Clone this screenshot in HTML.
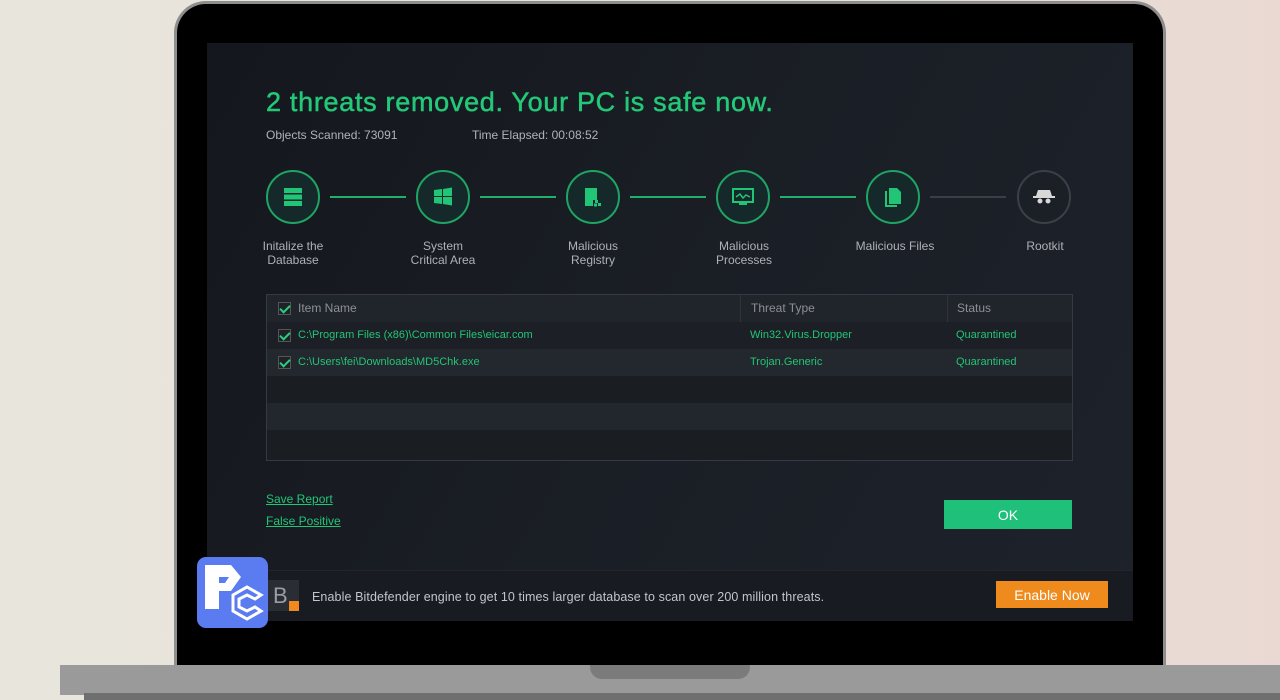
<!DOCTYPE html>
<html><head><meta charset="utf-8"><style>
*{margin:0;padding:0;box-sizing:border-box}
body{width:1280px;height:700px;overflow:hidden;position:relative;background:linear-gradient(90deg,#e8e5dc 0%,#e6e3da 60%,#ead9d3 100%);font-family:"Liberation Sans",sans-serif}
.bezel{position:absolute;left:174px;top:1px;width:992px;height:680px;background:#000;border:3px solid #8e8e8e;border-bottom:none;border-radius:32px 32px 0 0}
.screen{position:absolute;left:207px;top:43px;width:926px;height:578px;background:linear-gradient(120deg,#14171d 0%,#1a1e25 50%,#1d222b 100%);overflow:hidden;color:#b9bcc0}
.base{position:absolute;left:60px;top:665px;width:1220px;height:30px;background:#9a9a9a}
.base2{position:absolute;left:84px;top:693px;width:1196px;height:7px;background:#6f6f6f}
.notch{position:absolute;left:590px;top:665px;width:160px;height:14px;background:#7b7b7b;border-radius:0 0 12px 12px}
h1{position:absolute;left:59px;top:44px;font-size:27px;font-weight:normal;color:#23c878;letter-spacing:0.7px;-webkit-text-stroke:0.5px #23c878}
.sub{position:absolute;top:85px;font-size:12px;color:#b0b3b8}
.step{position:absolute;top:127px;width:54px;height:54px;border:2px solid #1fa463;border-radius:50%;background:#15282a;display:flex;align-items:center;justify-content:center}
.step.off{border-color:#3b4048;background:#1b1f26}
.line{position:absolute;top:153px;height:2px;background:#1fb06a;width:76px}
.line.off{background:#3a3f47}
.lbl{position:absolute;top:196px;width:120px;text-align:center;font-size:12px;line-height:14px;color:#aeb1b6}
.tbl{position:absolute;left:59px;top:251px;width:807px;height:167px;border:1px solid #343943;background:#1a1d23}
.row{position:absolute;left:0;width:805px;height:27px;font-size:11px;line-height:27px}
.cb{position:absolute;left:11px;top:7px;width:13px;height:13px;border:1px solid #555;background:#1f2228}
.cb:after{content:"";position:absolute;left:3px;top:0px;width:4px;height:8px;border:solid #2bd07f;border-width:0 2px 2px 0;transform:rotate(45deg)}
.g{color:#22c576}
.btn{position:absolute;display:flex;align-items:center;justify-content:center;color:#fff;font-size:14px}
a{color:#22c576;text-decoration:underline;font-size:12px;position:absolute;left:59px}
</style></head><body>
<div class="bezel"></div>
<div class="base"></div><div class="base2"></div><div class="notch"></div>
<div class="screen">
<h1>2 threats removed. Your PC is safe now.</h1>
<div class="sub" style="left:59px">Objects Scanned: 73091</div>
<div class="sub" style="left:265px">Time Elapsed: 00:08:52</div>

<div class="step" style="left:59px"><svg width="22" height="22" viewBox="0 0 22 22"><rect x="2" y="2" width="18" height="5" fill="#22c576"/><rect x="2" y="8.5" width="18" height="5" fill="#22c576"/><rect x="2" y="15" width="18" height="5" fill="#22c576"/></svg></div>
<div class="line" style="left:123px"></div>
<div class="step" style="left:209px"><svg width="22" height="22" viewBox="0 0 22 22"><path d="M2 4l8-1v7H2zM11 3l9-1.5V10h-9zM2 11h8v7l-8-1zM11 11h9v8.5l-9-1.5z" fill="#22c576"/></svg></div>
<div class="line" style="left:273px"></div>
<div class="step" style="left:359px"><svg width="22" height="22" viewBox="0 0 22 22"><path d="M3 2h12v12h-4v6H3z" fill="#22c576"/><rect x="13" y="14" width="3" height="3" fill="#22c576"/><rect x="16" y="17" width="3" height="3" fill="#22c576"/><rect x="12" y="17.5" width="3" height="3" fill="#22c576"/></svg></div>
<div class="line" style="left:423px"></div>
<div class="step" style="left:509px"><svg width="24" height="22" viewBox="0 0 24 22"><rect x="2" y="3" width="20" height="13" fill="none" stroke="#22c576" stroke-width="2"/><path d="M5 11l4-3 3 4 3-3 4 2" fill="none" stroke="#22c576" stroke-width="1.5"/><rect x="8" y="17" width="8" height="2" fill="#22c576"/></svg></div>
<div class="line" style="left:573px"></div>
<div class="step" style="left:659px"><svg width="22" height="22" viewBox="0 0 22 22"><path d="M7 2h8l4 4v12H7z" fill="#22c576"/><path d="M4 5v15h11" fill="none" stroke="#22c576" stroke-width="2"/></svg></div>
<div class="line off" style="left:723px"></div>
<div class="step off" style="left:810px"><svg width="24" height="20" viewBox="0 0 24 20"><path d="M6 3h12l2 6H4z" fill="#d8d8d8"/><rect x="1" y="9" width="22" height="2" fill="#d8d8d8"/><circle cx="8" cy="14" r="2.5" fill="#d8d8d8"/><circle cx="16" cy="14" r="2.5" fill="#d8d8d8"/></svg></div>

<div class="lbl" style="left:26px">Initalize the<br>Database</div>
<div class="lbl" style="left:176px">System<br>Critical Area</div>
<div class="lbl" style="left:326px">Malicious<br>Registry</div>
<div class="lbl" style="left:477px">Malicious<br>Processes</div>
<div class="lbl" style="left:628px">Malicious Files</div>
<div class="lbl" style="left:778px">Rootkit</div>

<div class="tbl">
<div class="row" style="top:0;background:#20242b;color:#8d9096;font-size:12px"><div class="cb"></div><span style="position:absolute;left:31px">Item Name</span><span style="position:absolute;left:473px;border-left:1px solid #333;padding-left:10px;height:27px">Threat Type</span><span style="position:absolute;left:680px;border-left:1px solid #333;padding-left:9px;height:27px">Status</span></div>
<div class="row g" style="top:27px;background:#1c1f25"><div class="cb"></div><span style="position:absolute;left:31px">C:\Program Files (x86)\Common Files\eicar.com</span><span style="position:absolute;left:483px">Win32.Virus.Dropper</span><span style="position:absolute;left:689px">Quarantined</span></div>
<div class="row g" style="top:54px;background:#23272e"><div class="cb"></div><span style="position:absolute;left:31px">C:\Users\fei\Downloads\MD5Chk.exe</span><span style="position:absolute;left:483px">Trojan.Generic</span><span style="position:absolute;left:689px">Quarantined</span></div>
<div class="row" style="top:81px;background:#1a1d22"></div>
<div class="row" style="top:108px;background:#22262d"></div>
<div class="row" style="top:135px;background:#1a1d22;height:30px"></div>
</div>

<a style="top:449px">Save Report</a>
<a style="top:471px">False Positive</a>
<div class="btn" style="left:737px;top:457px;width:128px;height:29px;background:#1fc07a">OK</div>

<div style="position:absolute;left:0;top:527px;width:926px;height:51px;background:#181b21;border-top:1px solid #22262c"></div>
<div style="position:absolute;left:61px;top:537px;width:31px;height:31px;background:#2a2d33;color:#9a9da2;font-size:22px;padding-left:5px;line-height:31px">B<span style="position:absolute;right:0;bottom:0;width:10px;height:10px;background:#f08a1e"></span></div>
<div style="position:absolute;left:105px;top:547px;font-size:12.5px;color:#c2c5ca;letter-spacing:0.1px">Enable Bitdefender engine to get 10 times larger database to scan over 200 million threats.</div>
<div class="btn" style="left:789px;top:538px;width:112px;height:27px;background:#ef8a1d">Enable Now</div>
</div>

<div style="position:absolute;left:197px;top:557px;width:71px;height:71px;background:#5a7cf0;border-radius:9px;overflow:hidden">
<svg width="71" height="71" viewBox="0 0 71 71"><path d="M8 8h26l10 12-10 14H22v18H8z" fill="#fff"/><path d="M22 20h10l-4 6h-6z" fill="#5a7cf0"/><path d="M36 38l14-8 14 8-6 4-8-4-8 4v8l8 4 8-4 6 4-14 8-14-8z" fill="none" stroke="#fff" stroke-width="3"/></svg>
</div>
</body></html>
